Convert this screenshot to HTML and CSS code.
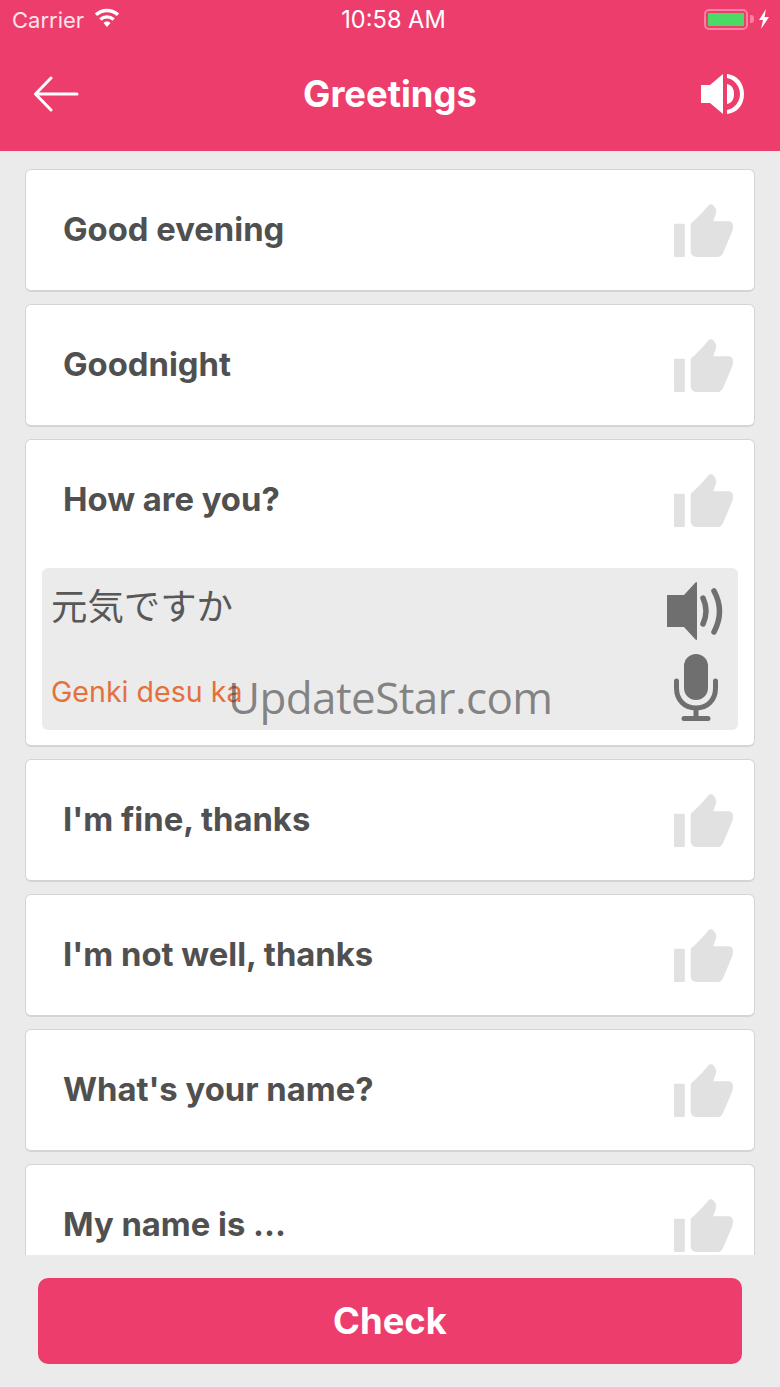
FILE: index.html
```html
<!DOCTYPE html>
<html lang="en">
<head>
<meta charset="utf-8">
<title>Greetings</title>
<link rel="stylesheet" href="styles.css">
</head>
<body>
<svg class="defs" width="0" height="0" aria-hidden="true">
  <symbol id="thumb" viewBox="0 0 60 54">
    <path d="M0 20.500a1 1 0 0 1 1-1h9a1 1 0 0 1 1 1v32a1 1 0 0 1-1 1H1a1 1 0 0 1-1-1z"/>
    <path d="M17 21c0-2 1-3 3-4l9-9 6-7c1-1.500 4-1.500 5 0 2 2 3 4 3 6 0 3-2 6-3 10h15c3 0 5 1.500 5 5 0 3-.5 5-1.500 7L50 49c-1.500 3-3 4.500-6 4.500H24c-4 0-7-2-7-6z"/>
  </symbol>
</svg>
<div class="app">
  <header class="header">
    <div class="status">
      <div class="status-left">
        <span>Carrier</span>
        <svg class="wifi" viewBox="0 0 26 20"><path d="M13 19 9.500 15a5 5 0 0 1 7 0zM7.500 12.800l-2.300-2.600a11.500 11.500 0 0 1 15.600 0l-2.300 2.600a8 8 0 0 0-11 0zM3.200 8 .8 5.400a18 18 0 0 1 24.400 0L22.800 8a14.500 14.500 0 0 0-19.600 0z"/></svg>
      </div>
      <span class="status-time">10:58 AM</span>
      <div class="status-right">
        <div class="battery"><div class="battery-fill"></div></div>
        <div class="battery-cap"></div>
        <svg class="bolt" viewBox="0 0 12 20"><path d="M8 0 1 11h4l-2 9 8-12H6.500z"/></svg>
      </div>
    </div>
    <div class="nav">
      <svg class="back" viewBox="0 0 46 36"><path d="M44 18H3M18 2 2.500 18 18 34" fill="none" stroke="#fff" stroke-width="3" stroke-linecap="round" stroke-linejoin="round"/></svg>
      <h1 class="title">Greetings</h1>
      <svg class="sound" viewBox="0 0 44 42"><path d="M0 12h9L22 1v40L9 30H0z"/><path d="M26 11c5 1 7 5 7 10s-2 9-7 10z"/><path d="M26 1c10 1 17 9 17 20s-7 19-17 20v-4c7-1 13-8 13-16S33 6 26 5z"/></svg>
    </div>
  </header>
  <main class="list">
    <section class="card"><div class="row"><span class="phrase">Good evening</span><svg class="thumb"><use href="#thumb"/></svg></div></section>
    <section class="card"><div class="row"><span class="phrase">Goodnight</span><svg class="thumb"><use href="#thumb"/></svg></div></section>
    <section class="card">
      <div class="row"><span class="phrase">How are you?</span><svg class="thumb"><use href="#thumb"/></svg></div>
      <div class="panel">
        <div class="panel-row">
          <span class="native">元気ですか</span>
          <svg class="speaker" viewBox="0 0 56 60"><path d="M0 14h17L28 2q2-2 2 0v56q0 2-2 0L17 46H0z"/><path d="M36 17q6 13 0 26M47 10q11 20 0 41" fill="none" stroke="#6f6f6f" stroke-width="5.500" stroke-linecap="round"/></svg>
        </div>
        <div class="panel-row">
          <span class="roman">Genki desu ka</span>
          <svg class="mic" viewBox="0 0 44 67"><rect x="10" y="0" width="24" height="46" rx="12"/><path d="M2.500 27v7c0 12 8 20 19.500 20s19.500-8 19.500-20v-7M22 54v10M10 64.500h24" fill="none" stroke="#6f6f6f" stroke-width="5" stroke-linecap="round"/></svg>
        </div>
      </div>
    </section>
    <section class="card"><div class="row"><span class="phrase">I'm fine, thanks</span><svg class="thumb"><use href="#thumb"/></svg></div></section>
    <section class="card"><div class="row"><span class="phrase">I'm not well, thanks</span><svg class="thumb"><use href="#thumb"/></svg></div></section>
    <section class="card"><div class="row"><span class="phrase">What's your name?</span><svg class="thumb"><use href="#thumb"/></svg></div></section>
    <section class="card"><div class="row"><span class="phrase">My name is ...</span><svg class="thumb"><use href="#thumb"/></svg></div></section>
  </main>
  <footer class="footer"><button class="check">Check</button></footer>
  <div class="watermark">UpdateStar.com</div>
</div>
</body>
</html>
```
FILE: styles.css
```css
* { box-sizing: border-box; }
html, body { margin: 0; padding: 0; }
body { font-family: Inter, "Noto Sans CJK JP", sans-serif; background: #ebebeb; }
.defs { position: absolute; }
.app { position: relative; width: 780px; height: 1387px; display: flex; flex-direction: column; overflow: hidden; background: #ebebeb; }
.header { height: 151px; flex: none; background: #ed3d6c; color: #fff; }
.status { height: 40px; padding: 0 10px 0 12px; display: grid; grid-template-columns: 1fr auto 1fr; align-items: center; font-size: 22px; line-height: 24px; }
.status-left { display: flex; align-items: center; gap: 10px; color: #fbe3ea; }
.wifi { width: 26px; height: 20px; fill: #fff; margin-top: -4px; }
.status-time { color: #fff; font-size: 23.600px; transform: translateX(2.500px); }
.status-right { display: flex; justify-content: flex-end; align-items: center; margin-top: -2px; }
.battery { width: 44px; height: 21px; border: 2px solid #fb7fa0; border-radius: 5px; padding: 2px; }
.battery-fill { height: 100%; background: #4cd964; border-radius: 1px; }
.battery-cap { width: 4px; height: 8px; background: #fb7fa0; border-radius: 0 3px 3px 0; margin: 0 4px 0 2px; }
.bolt { width: 12px; height: 20px; fill: #fff; }
.nav { height: 111px; padding: 0 35px 3px 33px; display: flex; align-items: center; justify-content: space-between; position: relative; }
.back { width: 46px; height: 36px; }
.title { position: absolute; left: 0; right: 0; margin: 0; text-align: center; font-size: 36.400px; line-height: 40px; font-weight: 700; }
.sound { width: 44px; height: 42px; fill: #fff; }
.list { flex: 1; min-height: 0; overflow: hidden; padding: 18px 25px 0; display: flex; flex-direction: column; gap: 12px; }
.card { flex: none; background: #fff; border: 1px solid #d4d4d4; border-bottom-width: 2px; border-radius: 6px; padding: 0 16px; }
.row { height: 120px; display: flex; align-items: center; justify-content: space-between; padding: 0 5px 0 21px; }
.phrase { font-size: 32.800px; line-height: 40px; font-weight: 700; color: #505050; margin-top: -2px; }
.thumb { width: 59px; height: 54px; fill: #e1e1e1; margin-top: 2px; }
.panel { height: 162px; margin: 8px 0 15px; background: #ebebeb; border-radius: 6px; padding: 10px 14px 9px 10px; display: flex; flex-direction: column; justify-content: space-between; }
.panel-row { display: flex; align-items: center; justify-content: space-between; }
.native { font-size: 36.400px; line-height: 54px; color: #585858; margin: -6px 0 0 -1px; }
.roman { font-size: 28.600px; line-height: 36px; color: #e4713c; margin: 8px 0 0 -1px; }
.speaker { width: 56px; height: 60px; fill: #6f6f6f; margin: 3px 1px 0 0; }
.mic { width: 44px; height: 67px; fill: #6f6f6f; margin-right: 6px; }
.footer { height: 132px; flex: none; background: #ebebeb; padding: 23px 38px; position: relative; }
.check { display: block; width: 100%; height: 86px; border: 0; border-radius: 10px; background: #ed3d6c; color: #fff; font: 700 36.400px/40px Inter, sans-serif; }
.watermark { position: absolute; left: 228px; top: 668px; font-family: "Open Sans", sans-serif; font-size: 44px; line-height: 58px; letter-spacing: -.6px; color: rgba(60, 60, 60, .6); white-space: nowrap; }
```
